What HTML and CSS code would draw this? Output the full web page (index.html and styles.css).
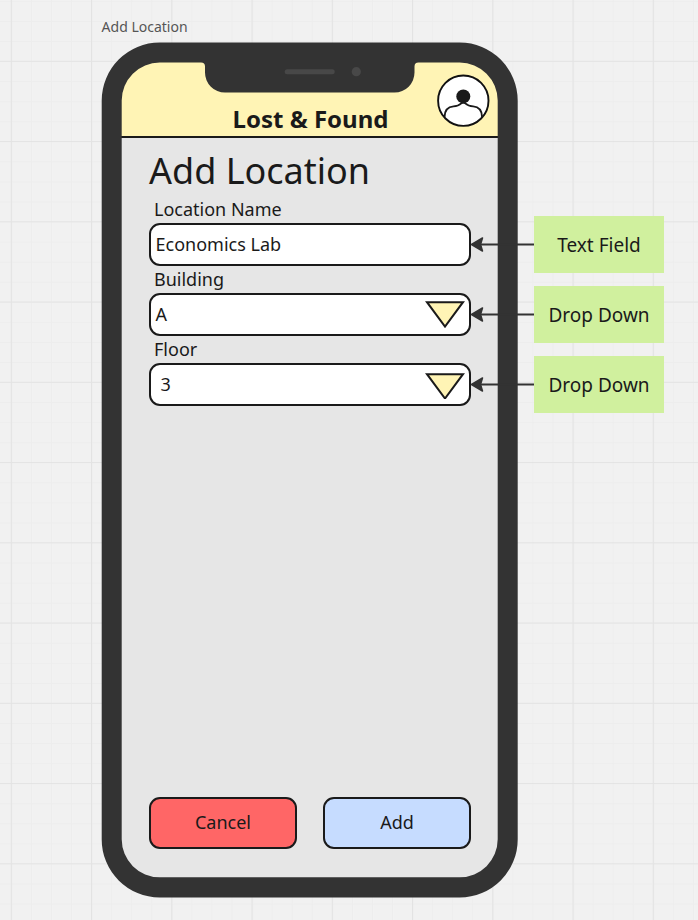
FILE: index.html
```html
<!DOCTYPE html>
<html lang="en">
<head>
<meta charset="utf-8">
<title>Add Location</title>
<link rel="stylesheet" href="styles.css">
</head>
<body>
<svg class="grid" width="698" height="920" aria-hidden="true">
  <defs>
    <pattern id="minor" x="10.9" y="0.9" width="20.06" height="20.06" patternUnits="userSpaceOnUse">
      <path d="M0 .5H20.06M.5 0V20.06" stroke="#ededed" fill="none"/>
    </pattern>
    <pattern id="major" x="10.8" y="60.800" width="80.25" height="80.25" patternUnits="userSpaceOnUse">
      <path d="M0 .5H80.25M.5 0V80.25" stroke="#e3e3e3" stroke-width="1.2" fill="none"/>
    </pattern>
  </defs>
  <rect width="698" height="920" fill="url(#minor)"/>
  <rect width="698" height="920" fill="url(#major)"/>
</svg>
<main class="board">
  <section class="frame">
    <h2 class="frame-name">Add Location</h2>
    <div class="phone">
      <div class="screen">
        <header class="header">
          <span class="app-name">Lost &amp; Found</span>
          <svg class="avatar" width="54" height="54" viewBox="0 0 54 54">
            <circle cx="27.300" cy="26.700" r="25.200" fill="#fff" stroke="#111" stroke-width="1.900"/>
            <circle cx="27.300" cy="22.400" r="7" fill="#1a1a1a"/>
            <path d="M8.500 43C8.700 36 12 32.800 17.500 32.400C22.500 32.200 24 30.600 25.500 29.200Q27.300 27.800 29.100 29.200C30.600 30.600 32.100 32.200 37.100 32.400C42.600 32.800 45.900 36 46.100 43" fill="none" stroke="#1a1a1a" stroke-width="1.900"/>
          </svg>
        </header>
        <div class="content">
          <h1 class="title">Add Location</h1>
          <div class="row">
            <span class="label">Location Name</span>
            <div class="field">Economics Lab</div>
          </div>
          <div class="row">
            <span class="label">Building</span>
            <div class="field">A
              <svg class="caret" width="40" height="29" viewBox="0 0 40 29"><path d="M2 2.200H38L20 26.500Z" fill="#fff4b5" stroke="#1a1a1a" stroke-width="2"/></svg>
            </div>
          </div>
          <div class="row">
            <span class="label">Floor</span>
            <div class="field field-indent">3
              <svg class="caret" width="40" height="29" viewBox="0 0 40 29"><path d="M2 4.200H38L20 28.500Z" fill="#fff4b5" stroke="#1a1a1a" stroke-width="2"/></svg>
            </div>
          </div>
          <div class="actions">
            <div class="button cancel">Cancel</div>
            <div class="button add">Add</div>
          </div>
        </div>
      </div>
      <svg class="shell" width="418" height="857" viewBox="101 42 418 857">
        <path fill="#333" fill-rule="evenodd" d="M159.700 42.600H459.700A58 58 0 0 1 517.700 100.600V839.400A58 58 0 0 1 459.700 897.400H159.700A58 58 0 0 1 101.700 839.400V100.600A58 58 0 0 1 159.700 42.600ZM159.700 62.600A38 38 0 0 0 121.700 100.600V839.300A38 38 0 0 0 159.700 877.300H459.700A38 38 0 0 0 497.700 839.300V100.600A38 38 0 0 0 459.700 62.600H418.500Q414.500 62.600 414.500 66.600V72.600A20 20 0 0 1 394.500 92.600H225A20 20 0 0 1 205 72.600V66.600Q205 62.600 201 62.600Z"/>
        <rect x="284.700" y="69.300" width="50" height="5" rx="2.500" fill="#484848"/>
        <circle cx="356.300" cy="71.700" r="4.600" fill="#484848"/>
      </svg>
    </div>
  </section>
  <aside class="notes">
    <div class="note">Text Field
      <svg class="arrow" width="64" height="18" viewBox="0 0 64 18"><path d="M10 9.500H64" stroke="#333" stroke-width="2"/><path d="M1.500 9.500L12.500 3L10.500 9.500L12.500 16Z" fill="#333" stroke="#333" stroke-width="1.500" stroke-linejoin="round"/></svg>
    </div>
    <div class="note">Drop Down
      <svg class="arrow" width="64" height="18" viewBox="0 0 64 18"><path d="M10 9.500H64" stroke="#333" stroke-width="2"/><path d="M1.500 9.500L12.500 3L10.500 9.500L12.500 16Z" fill="#333" stroke="#333" stroke-width="1.500" stroke-linejoin="round"/></svg>
    </div>
    <div class="note">Drop Down
      <svg class="arrow" width="64" height="18" viewBox="0 0 64 18"><path d="M10 9.500H64" stroke="#333" stroke-width="2"/><path d="M1.500 9.500L12.500 3L10.500 9.500L12.500 16Z" fill="#333" stroke="#333" stroke-width="1.500" stroke-linejoin="round"/></svg>
    </div>
  </aside>
</main>
</body>
</html>
```
FILE: styles.css
```css
* { box-sizing: border-box; }
body {
  margin: 0;
  height: 920px;
  overflow: hidden;
  background: #f1f1f1;
  color: #1a1a1a;
  font: 18px/24px "Noto Sans", sans-serif;
}
svg { display: block; }
.grid { position: absolute; inset: 0; }
.board {
  position: relative;
  display: flex;
  gap: 15px;
  padding: 17px 0 0 101px;
}
.frame { width: 418px; }
.frame-name {
  margin: 0;
  height: 25px;
  padding-left: 0.6px;
  font-size: 14px;
  line-height: 20px;
  font-weight: 400;
  color: #555;
}
.phone { position: relative; height: 857px; padding: 20px; }
.shell { position: absolute; top: 0; left: 0; }
.screen {
  display: flex;
  flex-direction: column;
  height: 817px;
  background: #e6e6e6;
  border-radius: 38px;
  overflow: hidden;
}
.header {
  position: relative;
  height: 76px;
  padding: 41px 0 0 1px;
  background: #fff4b5;
  border-bottom: 2px solid #1a1a1a;
  text-align: center;
}
.app-name { font-size: 24px; line-height: 32px; font-weight: 700; }
.avatar { position: absolute; top: 12px; right: 9px; }
.content {
  flex: 1;
  display: flex;
  flex-direction: column;
  padding: 7px 28px 0 28px;
}
.title { margin: 0; font-size: 36px; line-height: 52px; height: 54px; font-weight: 400; }
.row { height: 70px; }
.label { display: block; height: 24px; padding-left: 5px; line-height: 20px; }
.field {
  display: flex;
  align-items: center;
  justify-content: space-between;
  height: 43px;
  padding: 0 4px 1px 4.5px;
  background: #fff;
  border: 2px solid #1a1a1a;
  border-radius: 11px;
}
.field-indent { padding-left: 9.5px; }
.actions { display: flex; justify-content: space-between; margin-top: 388px; }
.button {
  width: 148px;
  height: 52px;
  border: 2px solid #1a1a1a;
  border-radius: 11px;
  text-align: center;
  line-height: 46px;
}
.cancel { background: #ff6666; }
.add { background: #c6dcff; }
.notes { display: flex; flex-direction: column; gap: 13px; padding-top: 199px; }
.note {
  position: relative;
  width: 130px;
  height: 57px;
  background: #d0f09e;
  font-size: 19px;
  text-align: center;
  line-height: 59px;
}
.arrow { position: absolute; top: 19px; right: 130px; }
```
